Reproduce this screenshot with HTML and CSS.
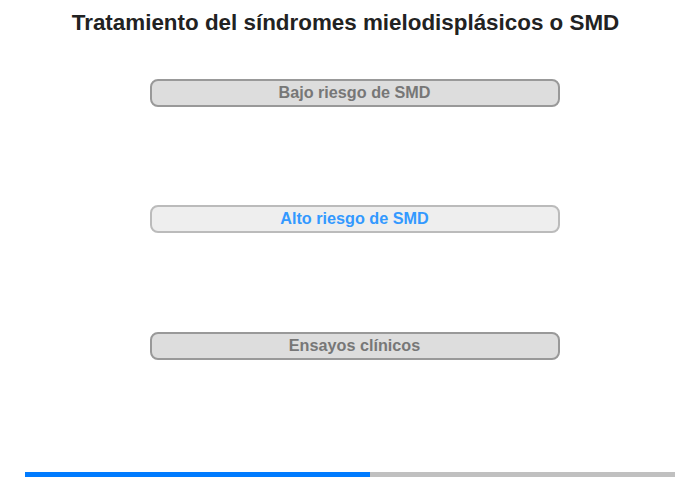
FILE: index.html
```html
<!DOCTYPE html>
<html lang="es">
<head>
<meta charset="utf-8">
<link rel="stylesheet" href="styles.css">
</head>
<body>
<div class="page">
  <h1 class="title">Tratamiento del síndromes mielodisplásicos o SMD</h1>
  <div class="options">
    <div class="btn">Bajo riesgo de SMD</div>
    <div class="btn active">Alto riesgo de SMD</div>
    <div class="btn last">Ensayos clínicos</div>
  </div>
  <div class="progress"><div class="fill" style="width:53%"></div></div>
</div>
</body>
</html>
```

FILE: styles.css
```css
html, body { margin: 0; padding: 0; background: #fff; }
body { font-family: "Liberation Sans", Arial, sans-serif; }
.page { width: 700px; height: 480px; display: flex; flex-direction: column; align-items: center; }
.title { margin: 10px 9px 0 0; font-size: 22.4px; font-weight: bold; color: #222; line-height: 26px; }
.options { display: flex; flex-direction: column; gap: 98px; margin: 43px 0 0 9px; }
.btn { width: 406px; height: 24px; line-height: 23px; border: 2px solid #999; border-radius: 8px; background: #ddd; color: #777; font-size: 16.2px; font-weight: bold; text-align: center; }
.btn.last { margin-top: 1px; }
.btn.active { background: #eee; border-color: #bbb; color: #3399ff; }
.progress { margin-top: auto; margin-bottom: 3px; width: 650px; height: 5px; background: #c0c0c0; display: flex; }
.fill { height: 100%; background: #007bff; }
```
